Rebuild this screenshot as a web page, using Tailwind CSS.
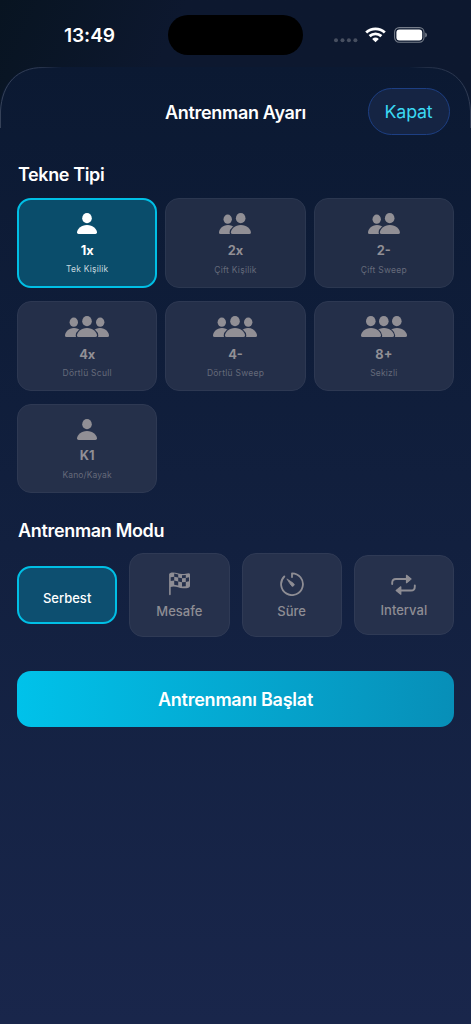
<!DOCTYPE html>
<html lang="tr">
<head>
<meta charset="utf-8">
<title>Antrenman Ayarı</title>
<script src="https://cdn.jsdelivr.net/npm/@tailwindcss/browser@4"></script>
</head>
<body class="w-[471px] h-[1024px] overflow-hidden bg-linear-to-br from-[#081421] via-[#0d182f] via-20% to-[#0d182f] font-['Inter','Liberation_Sans',sans-serif] text-white">
<svg class="absolute size-0" aria-hidden="true">
  <defs>
    <path id="torso" d="M1.6 8.9Q0 8.9 0 7.3C0 4.4 4 0 10 0S20 4.4 20 7.3Q20 8.9 18.4 8.9Z"/>
    <symbol id="one" viewBox="0 0 20 21"><ellipse cx="10" cy="5.2" rx="4.8" ry="5.1"/><use href="#torso" y="12"/></symbol>
    <mask id="mTwo" maskUnits="userSpaceOnUse" x="0" y="0" width="32" height="21"><rect width="32" height="21" fill="#fff"/><use href="#torso" x="11.9" y="12.1" fill="#000" stroke="#000" stroke-width="2.6"/></mask>
    <symbol id="two" viewBox="0 0 32 21"><ellipse cx="8.7" cy="6.2" rx="4.2" ry="4.6"/><g mask="url(#mTwo)"><use href="#torso" transform="translate(0 12.1) scale(.9 1)"/></g><ellipse cx="21.7" cy="5.2" rx="4.8" ry="5.1"/><use href="#torso" x="11.9" y="12.1"/></symbol>
    <mask id="mThree" maskUnits="userSpaceOnUse" x="0" y="0" width="44" height="21"><rect width="44" height="21" fill="#fff"/><use href="#torso" x="12" y="12.1" fill="#000" stroke="#000" stroke-width="2.6"/></mask>
    <symbol id="three" viewBox="0 0 44 21"><ellipse cx="8.8" cy="6.2" rx="4.2" ry="4.6"/><ellipse cx="35.2" cy="6.2" rx="4.2" ry="4.6"/><g mask="url(#mThree)"><use href="#torso" transform="translate(0 12.1) scale(.9 1)"/><use href="#torso" transform="translate(26 12.1) scale(.9 1)"/></g><ellipse cx="22" cy="5.2" rx="4.8" ry="5.1"/><use href="#torso" x="12" y="12.1"/></symbol>
    <mask id="mA" maskUnits="userSpaceOnUse" x="0" y="0" width="46" height="21"><rect width="46" height="21" fill="#fff"/><use href="#torso" y="12.1" fill="#000" stroke="#000" stroke-width="2.4"/></mask>
    <mask id="mB" maskUnits="userSpaceOnUse" x="0" y="0" width="46" height="21"><rect width="46" height="21" fill="#fff"/><use href="#torso" x="13" y="12.1" fill="#000" stroke="#000" stroke-width="2.4"/></mask>
    <symbol id="row3" viewBox="0 0 46 21"><ellipse cx="9.8" cy="5.2" rx="4.8" ry="5.1"/><ellipse cx="22.8" cy="5.2" rx="4.8" ry="5.1"/><ellipse cx="35.8" cy="5.2" rx="4.8" ry="5.1"/><use href="#torso" y="12.1"/><g mask="url(#mA)"><use href="#torso" x="13" y="12.1"/></g><g mask="url(#mB)"><use href="#torso" x="26" y="12.1"/></g></symbol>
  </defs>
</svg>

<header class="h-[67px] flex items-start">
  <div class="w-[168px] pl-[64px] pt-[23px] text-[19.2px] leading-6 font-semibold tracking-[-0.1px]">13:49</div>
  <div class="w-[135px] h-[39.5px] mt-[15px] rounded-full bg-black"></div>
  <div class="flex items-center ml-[31px] mt-[26px] h-[18px]">
    <svg class="w-6 h-[5px] mt-[10px]" viewBox="0 0 24 5" fill="#474f60"><circle cx="2" cy="2.3" r="2"/><circle cx="8.5" cy="2.3" r="2"/><circle cx="14.9" cy="2.3" r="2"/><circle cx="21.4" cy="2.3" r="2"/></svg>
    <svg class="w-[21px] h-[16px] ml-[7px] mt-0" viewBox="0 0 21 16" fill="none" stroke="#fff" stroke-width="2.9"><path d="M1.2 5.5Q5.2 1.9 10.5 1.9T19.8 5.5"/><path d="M4.6 9.2Q7.2 6.9 10.5 6.9T16.4 9.2"/><path d="M7.2 11.9Q10.5 9 13.8 11.9L10.5 15.2Z" fill="#fff" stroke="none"/></svg>
    <svg class="w-[33px] h-[16px] ml-[7.5px] -mt-px" viewBox="0 0 33 16"><rect x=".6" y=".6" width="29.4" height="14.6" rx="4.6" fill="none" stroke="#767d8a" stroke-width="1.1"/><rect x="2.4" y="2.4" width="25.8" height="11" rx="3" fill="#fff"/><path d="M31.2 5.4Q33 6.2 33 7.9T31.2 10.4Z" fill="#767d8a"/></svg>
  </div>
</header>

<main class="relative h-[957px] px-[17px] rounded-t-[40px] bg-linear-to-b from-[#0b1932] via-[#12203f] via-50% to-[#19264b]">
  <svg class="absolute inset-x-0 top-0 w-[471px] h-[64px]" viewBox="0 0 471 64" fill="none" stroke-width="1"><defs><linearGradient id="edge" x1="0" x2="1"><stop stop-color="#354158"/><stop offset=".08" stop-color="#2c3850"/><stop offset=".13" stop-color="#2c3850" stop-opacity="0"/><stop offset=".87" stop-color="#2c3850" stop-opacity="0"/><stop offset=".92" stop-color="#263149"/><stop offset="1" stop-color="#303b53"/></linearGradient></defs><path stroke="url(#edge)" d="M.5 61V44C2 17 17 .5 43 .5H428C454 .5 469 17 470.5 44V61"/></svg>
  <div class="h-[90px] pt-[21px] grid grid-cols-[1fr_auto_1fr] items-start">
    <span></span>
    <h1 class="pt-[13px] text-[18px] leading-6 font-semibold tracking-[-0.32px] whitespace-nowrap">Antrenman Ayarı</h1>
    <button class="justify-self-end mr-[4.5px] w-[82px] h-[47px] pt-px rounded-full border border-[#1d3f83] bg-[#152443] text-[17.8px] tracking-[-0.2px] text-[#3bd9f3]">Kapat</button>
  </div>

  <h2 class="pl-px pt-[6px] h-[40.5px] text-[18px] leading-6 font-semibold tracking-[-0.38px]">Tekne Tipi</h2>
  <section class="grid grid-cols-3 gap-x-2 gap-y-[12.75px] text-center text-[#918f95]">
    <div class="h-[90.5px] rounded-[14px] border-2 border-[#00bfe5] bg-[#0a4d6b] pt-[13.5px] text-white">
      <svg class="w-5 h-[21px] mx-auto" fill="currentColor"><use href="#one"/></svg>
      <p class="mt-[8.5px] text-[12.8px] leading-4 font-bold">1x</p>
      <p class="mt-[4.5px] text-[8.5px] leading-3 tracking-[0.2px] text-[#c5d7df]">Tek Kişilik</p>
    </div>
    <div class="h-[90.5px] rounded-[14px] border border-[#2b3750] bg-[#222d46] pt-[14px]">
      <svg class="w-8 h-[21px] mx-auto" fill="currentColor"><use href="#two"/></svg>
      <p class="mt-[9.5px] text-[12.8px] leading-4 font-bold">2x</p>
      <p class="mt-[4.5px] text-[8.5px] leading-3 tracking-[0.24px] text-[#656a7a]">Çift Kişilik</p>
    </div>
    <div class="h-[90.5px] rounded-[14px] border border-[#2b3750] bg-[#222d46] pt-[14px]">
      <svg class="w-8 h-[21px] mx-auto" fill="currentColor"><use href="#two"/></svg>
      <p class="mt-[9.5px] text-[12.8px] leading-4 font-bold">2-</p>
      <p class="mt-[4.5px] text-[8.5px] leading-3 tracking-[0.25px] text-[#656a7a]">Çift Sweep</p>
    </div>
    <div class="h-[90.5px] rounded-[14px] border border-[#2d3852] bg-[#242f49] pt-[14px]">
      <svg class="w-11 h-[21px] mx-auto" fill="currentColor"><use href="#three"/></svg>
      <p class="mt-[10px] text-[12.8px] leading-4 font-bold">4x</p>
      <p class="mt-[4.5px] text-[8.5px] leading-3 tracking-[0.25px] text-[#656a7a]">Dörtlü Scull</p>
    </div>
    <div class="h-[90.5px] rounded-[14px] border border-[#2d3852] bg-[#242f49] pt-[14px]">
      <svg class="w-11 h-[21px] mx-auto" fill="currentColor"><use href="#three"/></svg>
      <p class="mt-[10px] text-[12.8px] leading-4 font-bold">4-</p>
      <p class="mt-[4.5px] text-[8.5px] leading-3 tracking-[0.25px] text-[#656a7a]">Dörtlü Sweep</p>
    </div>
    <div class="h-[90.5px] rounded-[14px] border border-[#2d3852] bg-[#242f49] pt-[14px]">
      <svg class="w-[46px] h-[21px] mx-auto" fill="currentColor"><use href="#row3"/></svg>
      <p class="mt-[10px] text-[12.8px] leading-4 font-bold">8+</p>
      <p class="mt-[4.5px] text-[8.5px] leading-3 tracking-[0.2px] text-[#656a7a]">Sekizli</p>
    </div>
    <div class="h-[89px] rounded-[14px] border border-[#2e3953] bg-[#25304a] pt-[13.5px]">
      <svg class="w-5 h-[21px] mx-auto" fill="currentColor"><use href="#one"/></svg>
      <p class="mt-[8px] text-[12.8px] leading-4 font-bold">K1</p>
      <p class="mt-[5.2px] text-[8.5px] leading-3 tracking-[0.1px] text-[#656a7a]">Kano/Kayak</p>
    </div>
  </section>

  <h2 class="pl-px pt-[26px] h-[60px] text-[18px] leading-6 font-semibold tracking-[-0.33px]">Antrenman Modu</h2>
  <section class="grid grid-cols-4 gap-3 h-[83.5px] items-center text-center text-[13px] leading-4 font-medium">
    <div class="h-[58px] rounded-[14px] border-2 border-[#00bfe5] bg-[#0d4f70] pt-[22px] text-white">Serbest</div>
    <div class="h-[83.5px] rounded-[14px] border border-[#2f3a55] bg-[#26314c] pt-[18px] text-[#8e8d94]">
      <svg class="w-[23px] h-[24px] mx-auto" viewBox="0 0 23 24" fill="currentColor" fill-rule="evenodd"><path d="M1.1 2.2C1.3 1.1 3 .5 5 .5C8.5 .5 10.5 2.1 14 2.1C17 2.1 18.7 1.2 20.5 1.2Q22 1.2 22 2.6V14Q22 15 21 15.4C19.5 16 17.5 16.3 15 16.3C11 16.3 9 14.6 5.7 14.6C4.4 14.6 3.4 14.8 2.7 15V22.3Q2.7 23.2 1.9 23.2T1.1 22.3ZM2.7 5.2V9L6.2 8.6V4.8ZM6.2 1.6V4.8L10.2 5.6V2.4ZM6.2 8.6V12.7L10.2 13.6V9.5ZM10.2 5.6V9.5L14 10.2V6.3ZM14 3.2V6.3L17.8 6V2.9ZM14 10.2V14.5L17.8 14.3V9.9ZM17.8 6V9.9L21 9.2V5.3Z"/></svg>
      <p class="mt-[7px]">Mesafe</p>
    </div>
    <div class="h-[83.5px] rounded-[14px] border border-[#2f3a55] bg-[#26314c] pt-[18px] text-[#8e8d94]">
      <svg class="w-6 h-6 mx-auto" viewBox="0 0 24 24" fill="none" stroke="currentColor" stroke-width="1.8" stroke-linecap="round" stroke-linejoin="round"><path d="M12 5V1.3A10.9 10.9 0 1 1 4.3 4.5"/><path d="M7.2 7.1L13.4 11.3A1.6 1.6 0 1 1 11.2 13.5Z" fill="currentColor" stroke-width=".8"/></svg>
      <p class="mt-[7px]">Süre</p>
    </div>
    <div class="h-[80.5px] rounded-[14px] border border-[#2f3a55] bg-[#26314c] pt-[18px] text-[#8e8d94]">
      <svg class="w-[25px] h-[22px] mx-auto" viewBox="0 0 25 22" fill="none" stroke="currentColor" stroke-width="1.9" stroke-linecap="round" stroke-linejoin="round"><path d="M1.2 10V8.8Q1.2 5 5 5H15"/><path d="M15.5 1.3V8.7L20 5Z" fill="currentColor" stroke-width="1.2"/><path d="M23.8 11.5V12.7Q23.8 16.5 20 16.5H10"/><path d="M9.8 12.8V20.2L5.2 16.5Z" fill="currentColor" stroke-width="1.2"/></svg>
      <p class="mt-[6px]">Interval</p>
    </div>
  </section>

  <button class="mt-[34px] w-full h-[56px] pt-px rounded-[14px] bg-linear-to-r from-[#00c2ea] to-[#078fb8] text-[18px] font-semibold tracking-[-0.24px] block">Antrenmanı Başlat</button>
</main>
</body>
</html>
